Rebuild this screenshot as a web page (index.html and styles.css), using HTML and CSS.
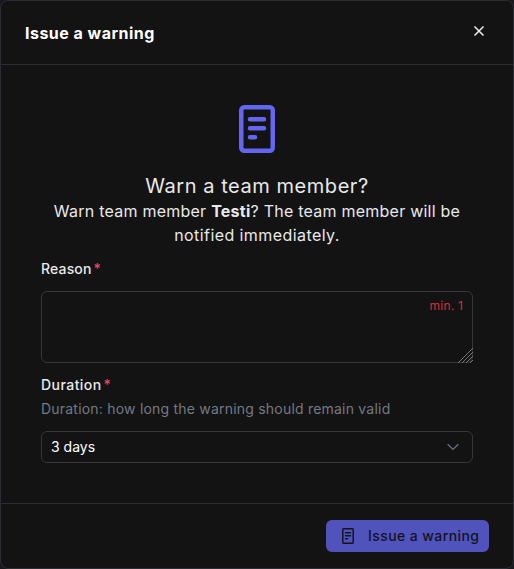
FILE: index.html
```html
<!DOCTYPE html>
<html lang="en">
<head>
<meta charset="utf-8">
<title>Issue a warning</title>
<link rel="stylesheet" href="styles.css">
</head>
<body>
<section class="modal">
  <header class="modal-header">
    <h1 class="title"><span>Issue a warning</span></h1>
    <button class="close" aria-label="Close"><svg width="12" height="12" viewBox="0 0 12 12"><path d="M1.5 1.5l9 9M10.5 1.5l-9 9"/></svg></button>
  </header>
  <main class="modal-body">
    <svg class="hero" width="36" height="48" viewBox="0 0 36 48"><rect x="2.25" y="2.25" width="31.5" height="43.5" rx="3"/><path d="M11 14.3h14M11 23.3h14M11 32.3h5"/></svg>
    <h2 class="heading"><span>Warn a team member?</span></h2>
    <p class="message"><span class="line-one">Warn team member <b>Testi</b>? The team member will be</span><br><span class="line-two">notified immediately.</span></p>
    <label class="label reason"><span>Reason</span><i>*</i></label>
    <div class="area">
      <textarea class="textarea"></textarea>
      <span class="hint">min. 1</span>
      <svg class="grip" width="15" height="15" viewBox="0 0 15 15"><path d="M0 15L15 0M4 15L15 4M8 15l7-7M12 15l3-3"/></svg>
    </div>
    <label class="label duration"><span>Duration</span><i>*</i></label>
    <p class="description"><span>Duration: how long the warning should remain valid</span></p>
    <div class="select"><span>3 days</span><svg width="12" height="8" viewBox="0 0 12 8"><path d="M.7 1.2L6 6.4l5.3-5.2"/></svg></div>
  </main>
  <footer class="modal-footer">
    <button class="submit"><svg width="12" height="16" viewBox="0 0 12 16"><rect x=".75" y=".75" width="10.5" height="14.5" rx="1"/><path d="M3.5 4.8h5M3.5 7.8h5M3.5 10.8h2"/></svg><span>Issue a warning</span></button>
  </footer>
</section>
</body>
</html>
```
FILE: styles.css
```css
* { box-sizing: border-box; }
body { margin: 0; background: #17171d; font-family: Inter, sans-serif; color: #e9e9ea; }
h1, h2, p { margin: 0; }
button { font-family: inherit; border: 0; padding: 0; }
svg { fill: none; display: block; flex: none; }
.modal { height: 569px; display: flex; flex-direction: column; background: #131313; border: 1px solid #2b2d32; border-radius: 8px; }
.modal-header { height: 64px; display: flex; align-items: center; justify-content: space-between; padding: 0 28px 0 24px; border-bottom: 1px solid #2b2d32; }
.title { font-size: 16px; line-height: 24px; font-weight: 700; color: #fff; letter-spacing: .48px; padding-top: 2px; }
.close { background: none; margin-bottom: 3px; }
.close svg { stroke: #eee; stroke-width: 1.5; }
.modal-body { flex: 1; padding: 40px; display: flex; flex-direction: column; }
.hero { align-self: center; stroke: #6366f1; stroke-width: 4.5; stroke-linecap: round; }
.heading { margin-top: 19px; font-size: 20px; line-height: 28px; font-weight: 400; text-align: center; white-space: nowrap; letter-spacing: .55px; }
.message { margin-top: -1px; font-size: 16px; line-height: 24px; text-align: center; white-space: nowrap; }
.line-one { letter-spacing: .24px; }
.line-two { letter-spacing: .42px; }
.label { display: flex; font-size: 14px; line-height: 20px; font-weight: 500; }
.label i { color: #f43f5e; font-style: normal; margin-left: 2px; }
.reason { margin-top: 12px; letter-spacing: .15px; }
.area { position: relative; height: 72px; margin-top: 12px; }
.textarea { display: block; width: 100%; height: 100%; background: transparent; border: 1px solid #36373c; border-radius: 6px; resize: none; outline: 0; }
.hint { position: absolute; right: 10px; top: 6px; font-size: 12px; line-height: 18px; letter-spacing: .2px; color: #dc2e38; }
.grip { position: absolute; right: 0; bottom: 0; stroke: #77787a; stroke-width: 1; }
.duration { margin-top: 12px; letter-spacing: .45px; }
.description { margin-top: 4px; font-size: 14px; line-height: 20px; color: #747984; white-space: nowrap; letter-spacing: .21px; }
.select { margin-top: 12px; height: 32px; border: 1px solid #36373c; border-radius: 6px; display: flex; align-items: center; justify-content: space-between; padding: 0 13px 0 9px; font-size: 14px; color: #fff; }
.select svg { stroke: #6b7280; stroke-width: 1.3; }
.modal-footer { height: 66px; border-top: 1px solid #2b2d32; display: flex; align-items: center; justify-content: flex-end; padding-right: 24px; }
.submit { width: 163px; height: 32px; border-radius: 6px; background: #5153bd; color: #131319; display: flex; align-items: center; padding-left: 16px; font-size: 14px; font-weight: 500; white-space: nowrap; letter-spacing: .42px; }
.submit span { margin-left: 14px; }
.submit svg { stroke: #131319; stroke-width: 1.5; stroke-linecap: round; }
```
